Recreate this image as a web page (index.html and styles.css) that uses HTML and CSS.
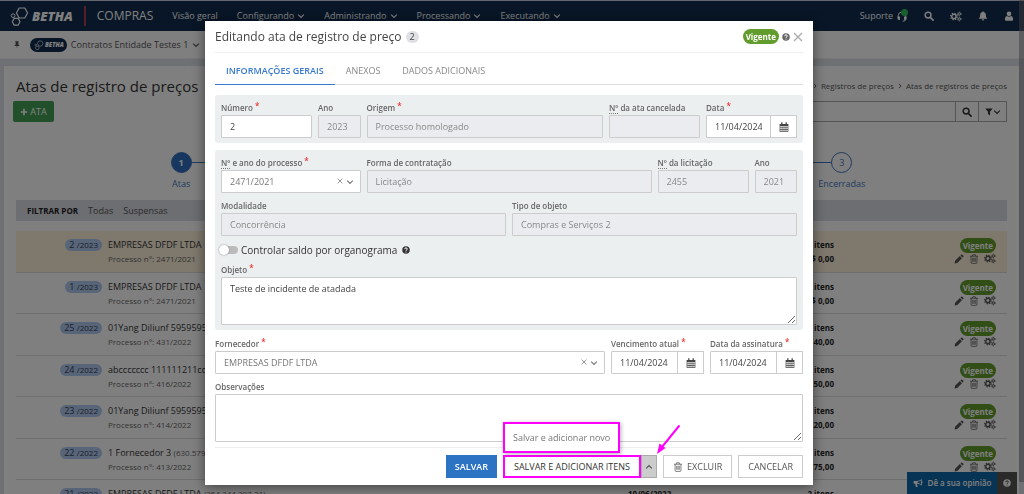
FILE: index.html
```html
<!DOCTYPE html>
<html lang="pt-BR">
<head>
<meta charset="utf-8">
<title>Atas de registro de preços</title>
<link rel="stylesheet" href="styles.css">
</head>
<body>
<svg class="sprite" aria-hidden="true">
  <symbol id="logo" viewBox="10 4 19 20"><g fill="none" stroke="currentColor" stroke-linejoin="round"><path stroke-width="1.2" d="M19.2 6h5.6l2.8 5-2.8 5h-5.6l-2.8-5z"/><path stroke-width="1.2" d="M14.2 16.4h3.9l1.9 3.4-1.9 3.4h-3.9l-1.9-3.4z"/><path d="M12.1 12h2l1 1.7-1 1.7h-2l-1-1.7z"/></g></symbol>
  <symbol id="chev" viewBox="0 0 10 10"><path d="M1.5 3.2 5 6.8l3.500-3.600" fill="none" stroke="currentColor" stroke-width="1.500"/></symbol>
  <symbol id="up" viewBox="0 0 10 10"><path d="M1.500 6.800 5 3.200l3.500 3.600" fill="none" stroke="currentColor" stroke-width="1.500"/></symbol>
  <symbol id="x" viewBox="0 0 10 10"><path d="M1 1l8 8M9 1 1 9" fill="none" stroke="currentColor" stroke-width="1.300"/></symbol>
  <symbol id="search" viewBox="0 0 16 16"><circle cx="6.500" cy="6.500" r="4.700" fill="none" stroke="currentColor" stroke-width="2.400"/><path d="m10 10 4.500 4.500" stroke="currentColor" stroke-width="2.800" stroke-linecap="round"/></symbol>
  <symbol id="gears" viewBox="0 0 20 16"><g fill="none" stroke="currentColor"><circle cx="6.500" cy="8" r="3.600" stroke-width="2.400"/><circle cx="6.500" cy="8" r="5.500" stroke-width="2" stroke-dasharray="2.200 2.120"/><circle cx="15.500" cy="3.800" r="2" stroke-width="1.600"/><circle cx="15.500" cy="3.800" r="3.200" stroke-width="1.200" stroke-dasharray="1.700 1.650"/><circle cx="15.500" cy="12.200" r="2" stroke-width="1.600"/><circle cx="15.500" cy="12.200" r="3.200" stroke-width="1.200" stroke-dasharray="1.700 1.650"/></g></symbol>
  <symbol id="bell" viewBox="0 0 16 16"><path fill="currentColor" d="M8 .5c.7 0 1 .5 1 1.100C11.500 2.100 12.500 4 12.500 6c0 3.500 1 5 2.500 6.500H1C2.500 11 3.500 9.500 3.500 6c0-2 1-3.900 3.500-4.400 0-.6.300-1.100 1-1.100zM6 13.300h4a2 2 0 0 1-4 0z"/></symbol>
  <symbol id="user" viewBox="0 0 14 16"><circle cx="7" cy="4.500" r="3.700" fill="currentColor"/><path fill="currentColor" d="M3.500 7.800c2 1.700 5 1.700 7 0 2.200.4 3 3 3 5.200 0 1.500-1 2.500-2.200 2.500H2.700C1.500 15.500.5 14.500.5 13c0-2.200.8-4.800 3-5.200z"/></symbol>
  <symbol id="headset" viewBox="0 0 16 16"><path d="M2.500 10V7a5.500 5.500 0 0 1 11 0v5c0 2-1.500 2.700-4.500 2.700" fill="none" stroke="currentColor" stroke-width="1.400"/><path fill="currentColor" d="M1.500 8H5v5H3.500a2 2 0 0 1-2-2zM11 8h3.500v3a2 2 0 0 1-2 2H11z"/></symbol>
  <symbol id="pin" viewBox="0 0 12 16"><path fill="currentColor" d="M2.500.5h7v2H8.700v4.300c1.300.6 2.300 1.700 2.300 3.200H6.700L6 15.500 5.300 10H1c0-1.500 1-2.600 2.300-3.200V2.500h-.8z"/></symbol>
  <symbol id="plus" viewBox="0 0 10 10"><path d="M5 1v8M1 5h8" stroke="currentColor" stroke-width="2"/></symbol>
  <symbol id="funnel" viewBox="0 0 14 14"><path fill="currentColor" d="M.5 1h13L8.700 6.500V13L5.300 10.500v-4z"/></symbol>
  <symbol id="pencil" viewBox="0 0 16 16"><path fill="currentColor" d="m1 15 .8-4.200 7.500-7.500 3.400 3.400-7.500 7.500zM10.300 2.300l1.300-1.200a1.200 1.200 0 0 1 1.700 0l1.700 1.700a1.200 1.200 0 0 1 0 1.700l-1.300 1.200z"/></symbol>
  <symbol id="trash" viewBox="0 0 14 16"><path d="M.5 3.500h13M4.500 3.500 5 1.200h4l.5 2.300M2.300 3.500v10c0 .9.500 1.500 1.200 1.500h7c.7 0 1.200-.6 1.200-1.500v-10M5 6v6.500M7 6v6.500M9 6v6.500" fill="none" stroke="currentColor" stroke-width="1.200"/></symbol>
  <symbol id="cal" viewBox="0 0 16 16"><path fill="currentColor" fill-rule="evenodd" d="M1 3h14v12.500H1zM2.200 6.200v2h2.200v-2zm3.200 0v2h2.100v-2zm3.100 0v2h2.100v-2zm3.200 0v2h2.200v-2zM2.200 9.200v2h2.200v-2zm3.200 0v2h2.100v-2zm3.100 0v2h2.100v-2zm3.200 0v2h2.200v-2zM2.200 12.200v2h2.200v-2zm3.200 0v2h2.100v-2zm3.100 0v2h2.100v-2zm3.200 0v2h2.200v-2z"/><path d="M4.500.5v4M11.500.5v4" stroke="currentColor" stroke-width="2"/></symbol>
  <symbol id="help" viewBox="0 0 16 16"><circle cx="8" cy="8" r="7.500" fill="currentColor"/><path d="M5.300 6.300C5.300 4.500 6.500 3.700 8 3.700s2.700.9 2.700 2.300C10.700 7.700 8 7.800 8 9.700" fill="none" stroke="var(--mark, #fff)" stroke-width="2"/><circle cx="8" cy="12" r="1.200" fill="var(--mark, #fff)"/></symbol>
  <symbol id="horn" viewBox="0 0 16 14"><path fill="currentColor" fill-rule="evenodd" d="M14 .5v4a1.300 1.300 0 0 1 0 2.800v4C12 9.600 9.500 8.500 7 8.300c-.8.600-.6 1.500 0 2-.5.700 0 1.400 1 2-.7 1.200-2.800 1.200-3.500.5-.5-1.500-1-2.800-.6-4.600H2.500C1.500 8.200.8 7.500.8 6.600V5.300c0-1 .7-1.600 1.700-1.600h3.500C9 3.700 12 2.300 14 .5zm-1.300 2.600C11 4.200 9.300 4.700 7.500 4.900v2.200c1.800.2 3.500.7 5.200 1.800z"/></symbol>
</svg>

<div class="page">
  <header class="nav">
    <a class="brand" href="#"><svg class="brand-mark"><use href="#logo"/></svg><span>BETHA</span></a>
    <span class="product">COMPRAS</span>
    <nav class="menu">
      <a href="#">Visão geral</a>
      <a href="#">Configurando <svg class="i8"><use href="#chev"/></svg></a>
      <a href="#">Administrando <svg class="i8"><use href="#chev"/></svg></a>
      <a href="#">Processando <svg class="i8"><use href="#chev"/></svg></a>
      <a href="#">Executando <svg class="i8"><use href="#chev"/></svg></a>
    </nav>
    <div class="tools">
      <a class="support" href="#">Suporte <svg class="i12"><use href="#headset"/></svg></a>
      <button aria-label="Pesquisar"><svg class="i10"><use href="#search"/></svg></button>
      <button aria-label="Configurações"><svg class="i12"><use href="#gears"/></svg></button>
      <button aria-label="Notificações"><svg class="i10"><use href="#bell"/></svg></button>
      <button aria-label="Usuário"><svg class="i10"><use href="#user"/></svg></button>
    </div>
  </header>

  <div class="context">
    <svg class="i8"><use href="#pin"/></svg>
    <span class="chip"><svg class="i10"><use href="#logo"/></svg>BETHA</span>
    <a class="entity" href="#">Contratos Entidade Testes 1 <svg class="i8"><use href="#chev"/></svg></a>
  </div>

  <main class="card">
    <div class="card-head">
      <h1>Atas de registro de preços</h1>
      <nav class="crumbs"><svg class="i6"><use href="#chev"/></svg> <a href="#">Registros de preços</a> <svg class="i6"><use href="#chev"/></svg> <a href="#">Atas de registros de preços</a></nav>
    </div>
    <div class="card-tools">
      <button class="add"><svg class="i8"><use href="#plus"/></svg> ATA</button>
      <div class="search">
        <input type="text" aria-label="Pesquisar atas">
        <button aria-label="Buscar"><svg class="i10"><use href="#search"/></svg></button>
        <button aria-label="Filtros"><svg class="i8"><use href="#funnel"/></svg><svg class="i8"><use href="#chev"/></svg></button>
      </div>
    </div>
    <ol class="steps">
      <li class="on"><b>1</b><span>Atas</span></li>
      <li><b>2</b><span>Itens</span></li>
      <li><b>3</b><span>Encerradas</span></li>
    </ol>
    <div class="filter"><strong>FILTRAR POR</strong><a href="#">Todas</a><a href="#">Suspensas</a></div>
    <ul class="rows">
      <li class="hot"><span class="num">2 <small>/2023</small></span><div class="who"><a href="#">EMPRESAS DFDF LTDA</a><p>Processo n°: 2471/2021</p></div><time>11/04/2024</time><div class="sum">0 itens<br>R$ 0,00</div><div class="act"><span class="tag">Vigente</span><div><button aria-label="Editar"><svg class="i10"><use href="#pencil"/></svg></button><button aria-label="Excluir"><svg class="i10"><use href="#trash"/></svg></button><button aria-label="Opções"><svg class="i12"><use href="#gears"/></svg></button></div></div></li>
      <li><span class="num">1 <small>/2023</small></span><div class="who"><a href="#">EMPRESAS DFDF LTDA</a><p>Processo n°: 2471/2021</p></div><time>11/04/2024</time><div class="sum">0 itens<br>R$ 0,00</div><div class="act"><span class="tag">Vigente</span><div><button aria-label="Editar"><svg class="i10"><use href="#pencil"/></svg></button><button aria-label="Excluir"><svg class="i10"><use href="#trash"/></svg></button><button aria-label="Opções"><svg class="i12"><use href="#gears"/></svg></button></div></div></li>
      <li><span class="num">25 <small>/2022</small></span><div class="who"><a href="#">01Yang Diliunf 595959595</a><p>Processo n°: 431/2022</p></div><time>10/06/2022</time><div class="sum">2 itens<br>R$ 40,00</div><div class="act"><span class="tag">Vigente</span><div><button aria-label="Editar"><svg class="i10"><use href="#pencil"/></svg></button><button aria-label="Excluir"><svg class="i10"><use href="#trash"/></svg></button><button aria-label="Opções"><svg class="i12"><use href="#gears"/></svg></button></div></div></li>
      <li><span class="num">24 <small>/2022</small></span><div class="who"><a href="#">abccccccc 111111211ccc</a><p>Processo n°: 416/2022</p></div><time>10/06/2022</time><div class="sum">2 itens<br>R$ 50,00</div><div class="act"><span class="tag">Vigente</span><div><button aria-label="Editar"><svg class="i10"><use href="#pencil"/></svg></button><button aria-label="Excluir"><svg class="i10"><use href="#trash"/></svg></button><button aria-label="Opções"><svg class="i12"><use href="#gears"/></svg></button></div></div></li>
      <li><span class="num">23 <small>/2022</small></span><div class="who"><a href="#">01Yang Diliunf 595959595</a><p>Processo n°: 414/2022</p></div><time>10/06/2022</time><div class="sum">2 itens<br>R$ 20,00</div><div class="act"><span class="tag">Vigente</span><div><button aria-label="Editar"><svg class="i10"><use href="#pencil"/></svg></button><button aria-label="Excluir"><svg class="i10"><use href="#trash"/></svg></button><button aria-label="Opções"><svg class="i12"><use href="#gears"/></svg></button></div></div></li>
      <li><span class="num">22 <small>/2022</small></span><div class="who"><a href="#">1 Fornecedor 3 <small>(630.579)</small></a><p>Processo n°: 413/2022</p></div><time>10/06/2022</time><div class="sum">2 itens<br>R$ 75,00</div><div class="act"><span class="tag">Vigente</span><div><button aria-label="Editar"><svg class="i10"><use href="#pencil"/></svg></button><button aria-label="Excluir"><svg class="i10"><use href="#trash"/></svg></button><button aria-label="Opções"><svg class="i12"><use href="#gears"/></svg></button></div></div></li>
      <li><span class="num">21 <small>/2022</small></span><div class="who"><a href="#">EMPRESAS DFDF LTDA <small>(354.344.397-21)</small></a></div><time>10/06/2022</time><div class="sum">2 itens</div><div class="act"></div></li>
    </ul>
  </main>
  <div class="opinion"><button class="opinion-main"><svg class="i10"><use href="#horn"/></svg> Dê a sua opinião</button><button class="opinion-help" aria-label="Ajuda"><svg class="i8"><use href="#help"/></svg></button></div>
  <div class="scroll"></div>
</div>

<div class="overlay">
  <form class="modal" role="dialog" aria-labelledby="modal-title">
    <header class="modal-head">
      <h2 id="modal-title">Editando ata de registro de preço</h2><span class="count">2</span>
      <div class="state"><span class="tag">Vigente</span><svg class="i8"><use href="#help"/></svg><button type="button" aria-label="Fechar"><svg class="i10"><use href="#x"/></svg></button></div>
    </header>
    <nav class="tabs"><a class="on" href="#">INFORMAÇÕES GERAIS</a><a href="#">ANEXOS</a><a href="#">DADOS ADICIONAIS</a></nav>

    <section class="group grid">
      <div class="f c2"><label class="req" for="numero">Número</label><input id="numero" type="text" value="2"></div>
      <div class="f c1"><label for="ano">Ano</label><input id="ano" type="text" value="2023" disabled></div>
      <div class="f c5"><label class="req" for="origem">Origem</label><input id="origem" type="text" value="Processo homologado" disabled></div>
      <div class="f c2"><label for="cancel"><abbr>Nº</abbr> da ata cancelada</label><input id="cancel" type="text" disabled></div>
      <div class="f c2"><label class="req" for="data">Data</label><div class="date"><input id="data" type="text" value="11/04/2024"><button type="button" aria-label="Calendário"><svg class="i10"><use href="#cal"/></svg></button></div></div>
    </section>

    <section class="group grid">
      <div class="f c3"><label class="req" for="proc"><abbr>Nº</abbr> e ano do processo</label><div class="pick"><select id="proc"><option>2471/2021</option></select><button type="button" aria-label="Limpar"><svg class="i6"><use href="#x"/></svg></button><svg class="i8"><use href="#chev"/></svg></div></div>
      <div class="f c6"><label for="forma">Forma de contratação</label><input id="forma" type="text" value="Licitação" disabled></div>
      <div class="f c2"><label for="lic"><abbr>Nº</abbr> da licitação</label><input id="lic" type="text" value="2455" disabled></div>
      <div class="f c1"><label for="ano2">Ano</label><input id="ano2" type="text" value="2021" disabled></div>
      <div class="f c6"><label for="mod">Modalidade</label><input id="mod" type="text" value="Concorrência" disabled></div>
      <div class="f c6"><label for="tipo">Tipo de objeto</label><input id="tipo" type="text" value="Compras e Serviços 2" disabled></div>
      <div class="c12 switch"><input id="saldo" type="checkbox"><label for="saldo">Controlar saldo por organograma</label><svg class="i8"><use href="#help"/></svg></div>
      <div class="f c12"><label class="req" for="objeto">Objeto</label><textarea id="objeto">Teste de incidente de atadada</textarea></div>
    </section>

    <section class="grid plain">
      <div class="f c8"><label class="req" for="forn">Fornecedor</label><div class="pick"><select id="forn"><option>EMPRESAS DFDF LTDA</option></select><button type="button" aria-label="Limpar"><svg class="i6"><use href="#x"/></svg></button><svg class="i8"><use href="#chev"/></svg></div></div>
      <div class="f c2"><label class="req" for="venc">Vencimento atual</label><div class="date"><input id="venc" type="text" value="11/04/2024"><button type="button" aria-label="Calendário"><svg class="i10"><use href="#cal"/></svg></button></div></div>
      <div class="f c2"><label class="req" for="assin">Data da assinatura</label><div class="date"><input id="assin" type="text" value="11/04/2024"><button type="button" aria-label="Calendário"><svg class="i10"><use href="#cal"/></svg></button></div></div>
      <div class="f c12"><label for="obs">Observações</label><textarea id="obs"></textarea></div>
    </section>

    <footer class="modal-foot">
      <button type="button" class="btn primary">SALVAR</button>
      <div class="split">
        <button type="button" class="btn marked">SALVAR E ADICIONAR ITENS</button><button type="button" class="btn toggle" aria-label="Mais opções"><svg class="i8"><use href="#up"/></svg></button>
        <div class="drop"><a href="#">Salvar e adicionar novo</a></div>
        <svg class="arrow" viewBox="0 0 26 32"><path d="M24 2 7 23" stroke="#f0f" stroke-width="2" stroke-linecap="round"/><path d="m2 30 2.500-10.500 6 4.500z" fill="#f0f"/></svg>
      </div>
      <button type="button" class="btn"><svg class="i10"><use href="#trash"/></svg> EXCLUIR</button>
      <button type="button" class="btn">CANCELAR</button>
    </footer>
  </form>
</div>
</body>
</html>
```
FILE: styles.css
```css
* { box-sizing: border-box; }
body { margin: 0; overflow: hidden; background: #dde1e7; color: #444; font: 9px/14px "Open Sans", sans-serif; }
h1, h2, p, ul, ol { margin: 0; padding: 0; font-weight: 400; list-style: none; }
a { color: inherit; text-decoration: none; }
button { border: 0; padding: 0; background: none; color: inherit; font: inherit; display: inline-flex; align-items: center; justify-content: center; }
input, select, textarea { font: inherit; color: inherit; }
small { font-size: 8px; }
.sprite { position: absolute; width: 0; height: 0; }
.i6 { width: 6px; height: 6px; }
.i8 { width: 8px; height: 8px; }
.i10 { width: 10px; height: 10px; }
.i12 { width: 12px; height: 11px; }
.tag { background: #629c2c; color: #fff; font-size: 8px; font-weight: 700; line-height: 15px; padding: 0 3px; border-radius: 8px; }

.page { height: 100vh; overflow: hidden; padding-right: 5px; border-top: 1px solid #ccd; }
.nav { display: flex; align-items: center; height: 30px; margin-right: -5px; padding: 0 10px; background: #102c4e; color: #fff; }
.brand { display: flex; align-items: center; gap: 3px; padding-right: 11px; border-right: 2px solid #b8384e; font: italic 800 13px/20px "Open Sans", sans-serif; }
.brand-mark { width: 19px; height: 20px; }
.product { font-size: 12px; padding: 0 19px 0 11px; }
.menu { display: flex; gap: 19px; flex: 1; }
.menu a, .support { display: flex; align-items: center; gap: 3px; }
.tools { display: flex; align-items: center; gap: 16px; }
.support { position: relative; }
.support::after { content: ""; position: absolute; right: 0; top: 0; width: 7px; height: 7px; border-radius: 50%; background: #2fc05a; }

.context { display: flex; align-items: center; height: 28px; padding: 0 13px; margin-right: -5px; background: #fff; color: #555; border-bottom: 1px solid #eee; }
.chip { display: flex; align-items: center; gap: 1px; margin: 0 4px 0 9px; padding: 0 3px 0 4px; border-radius: 7px; background: #102c4e; color: #fff; font: italic 800 6px/14px "Open Sans", sans-serif; }
.entity { display: flex; align-items: center; gap: 4px; }

.card { margin: 7px 0 0 4px; padding: 9px 12px; background: #fff; }
.card-head { display: flex; justify-content: space-between; align-items: center; height: 22px; }
.card-head h1 { font-size: 15px; line-height: 22px; color: #333; }
.crumbs { display: flex; align-items: center; gap: 3px; font-size: 8px; color: #555; }
.crumbs svg { transform: rotate(-90deg); }
.card-tools { display: flex; justify-content: space-between; margin-top: 4px; }
.add { gap: 2px; width: 41px; height: 21px; margin-left: -3px; background: #44a057; color: #fff; border-radius: 2px; }
.search { display: flex; width: 50%; height: 21px; border: 1px solid #aaa; color: #333; }
.search input { flex: 1; min-width: 0; border: 0; background: none; }
.search button { width: 23px; border-left: 1px solid #aaa; }
.search button:last-child { width: 28px; }
.steps { display: grid; grid-template-columns: repeat(3, 1fr); margin-top: 30px; color: #3f76bd; text-align: center; }
.steps li { position: relative; display: flex; flex-direction: column; align-items: center; gap: 4px; }
.steps li + li::before { content: ""; position: absolute; top: 10px; right: calc(50% + 10px); width: calc(100% - 20px); border-top: 1px solid #3f76bd; }
.steps b { width: 21px; height: 21px; line-height: 19px; border: 1px solid #3f76bd; border-radius: 50%; font-weight: 400; }
.steps .on b { background: #2e6fc0; color: #fff; font-weight: 700; }
.filter { display: flex; align-items: center; gap: 10px; height: 21px; margin-top: 9px; padding: 0 11px; background: #d9dce2; color: #555; font-size: 9px; }
.filter strong { font-size: 8px; color: #222; }
.rows { display: grid; grid-auto-rows: 42px 41px; margin-top: 10px; }
.rows li { display: flex; align-items: flex-start; padding: 7px 11px 0 0; border-bottom: 1px solid #ddd; }
.rows .hot { background: #fcf1db; }
.num { flex: none; margin: 1px 6px 0 auto; padding: 0 4px; border-radius: 6px; background: #b0c9f0; color: #345; line-height: 12px; }
.who { flex: none; width: 520px; color: #333; white-space: nowrap; }
.who small, .who p { color: #666; font-size: 8px; }
.rows time { width: 44px; font-size: 8px; font-weight: 700; color: #222; }
.sum { width: 162px; text-align: right; font-size: 8px; font-weight: 700; line-height: 14px; color: #222; }
.act { width: 162px; display: flex; flex-direction: column; align-items: flex-end; color: #555; }
.act div { display: flex; gap: 5px; height: 11px; }
.opinion { position: fixed; right: 7px; bottom: 0; display: flex; height: 22px; color: #fff; font-weight: 600; }
.opinion-main { gap: 5px; width: 90px; background: #0f68aa; font-size: 8px; }
.opinion-help { width: 20px; background: #555; --mark: #555; }
.scroll { position: fixed; top: 0; right: 0; width: 5px; height: 482px; background: rgba(120, 120, 130, .5); }

.overlay { position: fixed; inset: 0; padding: 21px 6px 0 0; background: rgba(0, 0, 0, .5); }
.modal { max-width: 608px; margin: 0 auto; padding: 0 10px; background: #fff; box-shadow: 0 2px 12px rgba(0, 0, 0, .5); }
.modal-head { display: flex; align-items: center; height: 32px; border-bottom: 1px solid #eee; }
.modal-head h2 { font-size: 12px; line-height: 18px; }
.count { margin-left: 4px; padding: 0 4px; border-radius: 6px; background: #dfe1e6; line-height: 12px; }
.state { display: flex; align-items: center; gap: 3px; margin-left: auto; color: #666; }
.state button { color: #aaa; }
.tabs { display: flex; height: 32px; border-bottom: 1px solid #ddd; color: #888; }
.tabs a { padding: 11px 11px 0; margin-bottom: -1px; }
.tabs .on { color: #3879cf; font-weight: 600; border-bottom: 1px solid #3879cf; }
.grid { display: grid; grid-template-columns: repeat(12, minmax(0, 1fr)); gap: 6px; }
.group { margin-top: 10px; padding: 6px 6px 5px; background: #ebeff0; border-radius: 3px; }
.group + .group { margin-top: 7px; }
.plain { padding: 7px 0 5px; border-bottom: 1px solid #eee; }
.c1 { grid-column: span 1; } .c2 { grid-column: span 2; } .c3 { grid-column: span 3; } .c5 { grid-column: span 5; }
.c6 { grid-column: span 6; } .c8 { grid-column: span 8; } .c12 { grid-column: span 12; }
.f label { display: block; height: 14px; font-size: 8px; font-weight: 600; color: #666; white-space: nowrap; }
.f abbr { border-bottom: 1px dotted #777; }
.req::after { content: " *"; color: #e33; font-size: 8px; vertical-align: 2px; line-height: 1; }
.f input, .f select, .f textarea { display: block; width: 100%; height: 23px; padding: 0 8px; border: 1px solid #ccc; border-radius: 1px; background: #fff; color: #444; }
.f input:disabled { background: #ebecf0; color: #888; }
.f textarea { height: 48px; padding: 4px 8px; }
.f select { appearance: none; color: #777; }
.date { display: flex; }
.f .date input { flex: 1; min-width: 0; }
.date button { width: 27px; margin-left: -1px; border: 1px solid #ccc; background: #fff; }
.pick { position: relative; }
.pick button, .pick svg.i8 { position: absolute; top: 8px; right: 7px; color: #777; }
.pick button { right: 18px; }
.switch { display: flex; align-items: center; gap: 3px; height: 15px; font-size: 10px; color: #333; }
.switch input { appearance: none; position: relative; width: 17px; height: 8px; margin: 0; border-radius: 4px; background: #bbb; }
.switch input::before { content: ""; position: absolute; left: -2px; top: -1px; width: 10px; height: 10px; border-radius: 50%; background: #fff; box-shadow: 0 0 2px #888; }
.switch svg { margin-left: 2px; }
.modal-foot { display: flex; justify-content: flex-end; gap: 6px; padding: 7px 0; }
.btn { gap: 4px; height: 23px; padding: 0 9px; border: 1px solid #ccc; background: #fff; color: #555; }
.primary { padding: 0 8px; background: #2c73c4; border-color: #2c73c4; color: #fff; font-weight: 600; }
.split { position: relative; display: flex; }
.marked { border: 2px solid #f0f; color: #333; }
.toggle { width: 16px; padding: 0; background: #ccc; border-color: #aaa; }
.drop { position: absolute; left: 0; bottom: 25px; padding: 7px 8px 6px; border: 2px solid #f0f; background: #fff; color: #777; white-space: nowrap; line-height: 14px; box-shadow: 1px 1px 4px rgba(0, 0, 0, .3); }
.arrow { position: absolute; right: -24px; bottom: 22px; width: 26px; height: 32px; }
```
